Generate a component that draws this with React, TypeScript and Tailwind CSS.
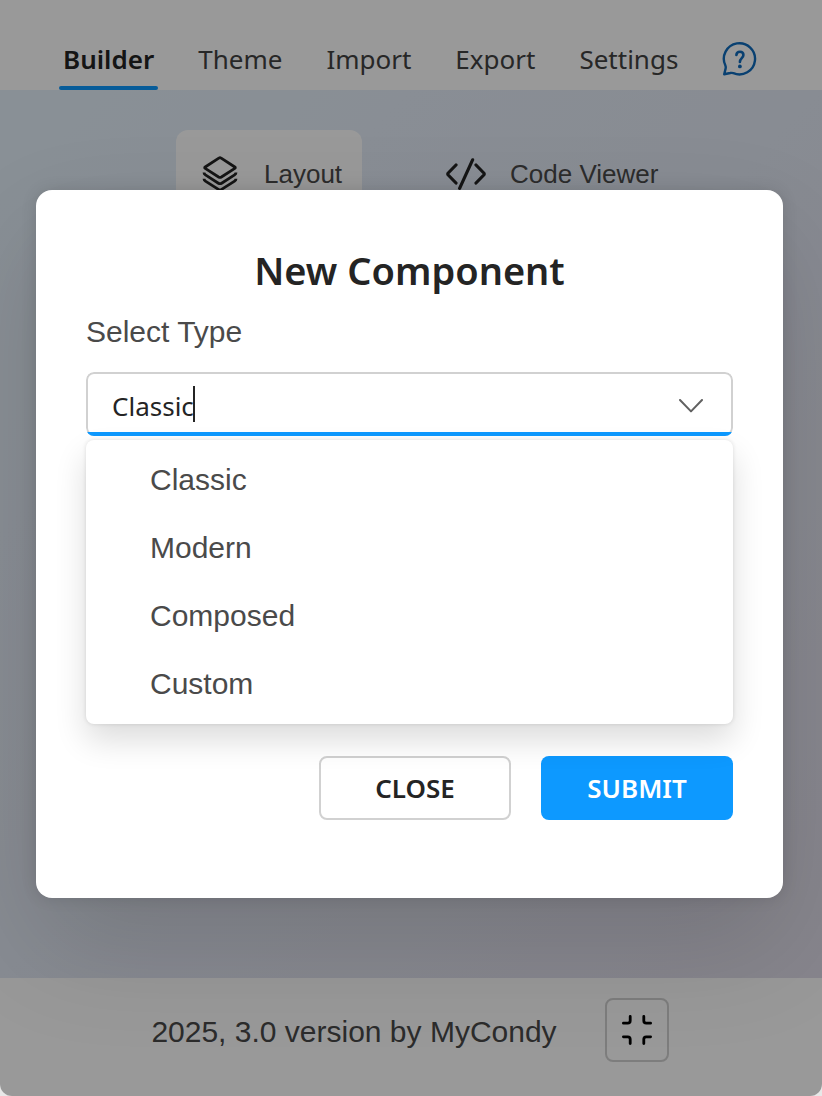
import { useState } from "react";

const tabs = ["Builder", "Theme", "Import", "Export", "Settings"];
const types = ["Classic", "Modern", "Composed", "Custom"];

function HelpIcon() {
  return (
    <svg viewBox="0 0 36 36" className="size-9" fill="none" stroke="currentColor" strokeWidth="2.4" strokeLinecap="round" strokeLinejoin="round">
      <path d="M2.2 33.2 L3.6 27.6 Q4 26 3.4 24.6 A15.6 15.6 0 1 1 11.4 32.2 Q9.8 31.6 8.2 32 Z" />
      <path d="M14.4 14 C14.6 9.6 21.4 9.6 21.4 14 C21.4 17 17.9 17.4 17.9 21" strokeWidth="2.6" />
      <circle cx="17.9" cy="25.4" r="1.9" fill="currentColor" stroke="none" />
    </svg>
  );
}

function LayersIcon() {
  return (
    <svg viewBox="0 0 36 36" className="size-9" fill="none" stroke="currentColor" strokeWidth="2.8" strokeLinejoin="round">
      <path d="M16.8 2.1 Q18 1.4 19.2 2.1 L32.8 11 Q33.8 11.7 32.8 12.4 L19.4 21 Q18 21.8 16.6 21 L3.2 12.4 Q2.2 11.7 3.2 11 Z" />
      <path d="M2 16.6 Q2 18 3.4 18.9 L16.4 27.2 Q18 28.2 19.6 27.2 L32.6 18.9 Q34 18 34 16.6" />
      <path d="M2 22.8 Q2 24.2 3.4 25.1 L16.4 33.4 Q18 34.4 19.6 33.4 L32.6 25.1 Q34 24.2 34 22.8" />
    </svg>
  );
}

function CodeIcon() {
  return (
    <svg viewBox="0 0 40 32" className="h-8 w-10" fill="none" stroke="currentColor" strokeWidth="3.2" strokeLinecap="round" strokeLinejoin="round">
      <path d="M10 7 L2.2 15 Q1.4 16 2.2 17 L10 25" />
      <path d="M30 7 L37.8 15 Q38.6 16 37.8 17 L30 25" />
      <path d="M26.6 1.8 L13.6 30.4" />
    </svg>
  );
}

function ChevronIcon() {
  return (
    <svg viewBox="0 0 24 14" className="h-3.5 w-6" fill="none" stroke="currentColor" strokeWidth="2" strokeLinecap="round" strokeLinejoin="round">
      <path d="M1 1 L12 12.4 L23 1" />
    </svg>
  );
}

function ShrinkIcon() {
  return (
    <svg viewBox="0 0 32 32" className="size-8" fill="none" stroke="currentColor" strokeWidth="2.8" strokeLinecap="round" strokeLinejoin="round">
      <path d="M2.4 9.2 H6.8 Q9.2 9.2 9.2 6.8 V2.4" />
      <path d="M29.6 9.2 H25.2 Q22.8 9.2 22.8 6.8 V2.4" />
      <path d="M2.4 22.8 H6.8 Q9.2 22.8 9.2 25.2 V29.6" />
      <path d="M29.6 22.8 H25.2 Q22.8 22.8 22.8 25.2 V29.6" />
    </svg>
  );
}

function Header() {
  return (
    <header className="flex h-[90px] shrink-0 items-end bg-white pl-[59px]">
      <nav className="flex items-end gap-9">
        {tabs.map((tab, i) => (
          <a
            key={tab}
            href="#"
            className={
              i === 0
                ? "relative px-1 pb-[13px] text-[26px] leading-9 font-semibold text-[#242424] after:absolute after:inset-x-0 after:bottom-0 after:h-1 after:rounded-full after:bg-[#0d99ff]"
                : "px-1 pb-[13px] text-[26px] leading-9 text-[#424242]"
            }
          >
            {tab}
          </a>
        ))}
        <button type="button" aria-label="Help" className="ml-1 pb-[13px] text-[#0f6cbd]">
          <HelpIcon />
        </button>
      </nav>
    </header>
  );
}

function Footer() {
  return (
    <footer className="flex h-[118px] shrink-0 items-start justify-center gap-12 bg-white pt-5 pr-0.5 font-['Liberation_Sans',Arial,sans-serif]">
      <p className="text-3xl leading-[68px] text-[#4a4a4a]">2025, 3.0 version by MyCondy</p>
      <button type="button" aria-label="Exit full screen" className="flex size-16 items-center justify-center rounded-lg border-2 border-[#d1d1d1] text-black">
        <ShrinkIcon />
      </button>
    </footer>
  );
}

function TypePicker() {
  const [value, setValue] = useState("Classic");

  return (
    <div className="relative">
      <label htmlFor="type" className="mb-2 block font-['Liberation_Sans',Arial,sans-serif] text-3xl leading-[64px] text-[#4a4a4a]">
        Select Type
      </label>
      <div className="relative overflow-hidden rounded-lg after:absolute after:inset-x-0 after:bottom-0 after:h-1 after:bg-[#0d99ff]">
        <input
          id="type"
          type="text"
          role="combobox"
          aria-expanded="true"
          aria-controls="type-list"
          value={value}
          onChange={(e) => setValue(e.target.value)}
          className="block h-16 w-full rounded-lg border-2 border-[#d1d1d1] bg-white px-6 pt-1 text-[26px] text-[#242424] caret-transparent outline-none"
        />
        {/* Caret */}
        <span className="absolute top-3.5 left-[107px] h-9 w-0.5 bg-[#242424]" />
        <button type="button" aria-label="Toggle list" className="absolute inset-y-0 right-[30px] pt-1 text-[#616161]">
          <ChevronIcon />
        </button>
      </div>
      {/* Options */}
      <ul
        id="type-list"
        role="listbox"
        aria-label="Select Type"
        className="absolute inset-x-0 top-full mt-1 rounded-lg bg-white py-1.5 font-['Liberation_Sans',Arial,sans-serif] shadow-[0_0_4px_rgba(0,0,0,0.12),0_16px_32px_rgba(0,0,0,0.14)]"
      >
        {types.map((type) => (
          <li key={type} role="option" aria-selected={type === value} onClick={() => setValue(type)} className="cursor-pointer pl-16 text-3xl leading-[68px] text-[#4a4a4a]">
            {type}
          </li>
        ))}
      </ul>
    </div>
  );
}

function App() {
  return (
    <div className="bg-[#e8e8e8]">
      <div className="relative flex min-h-screen flex-col overflow-hidden rounded-b-xl font-['Noto_Sans','Open_Sans',sans-serif]">
        <Header />

        <main className="flex flex-1 items-start bg-linear-to-br from-[#e5f1fb] via-[#e3e9f5] to-[#e2deeb] pt-10 pl-44 font-['Liberation_Sans',Arial,sans-serif] text-[26px] text-[#4a4a4a]">
          <button type="button" className="flex h-22 items-center gap-[26px] rounded-xl bg-white pr-5 pl-[26px]">
            <span className="text-[#242424]"><LayersIcon /></span>
            Layout
          </button>
          <button type="button" className="ml-[58px] flex h-22 items-center gap-6 rounded-xl px-[26px]">
            <span className="text-[#242424]"><CodeIcon /></span>
            Code Viewer
          </button>
        </main>

        <Footer />

        <div className="absolute inset-0 flex items-center justify-center bg-black/40 pr-[39px] pb-2 pl-9">
          <div role="dialog" aria-labelledby="dialog-title" className="w-full rounded-2xl bg-white px-[50px] pt-[50px] pb-[78px] shadow-[0_0_16px_rgba(0,0,0,0.12),0_48px_112px_rgba(0,0,0,0.14)]">
            <h1 id="dialog-title" className="text-center text-[38px] leading-[60px] font-semibold text-[#242424]">New Component</h1>
            <TypePicker />
            <div className="mt-80 flex justify-end gap-[30px] text-[26px] font-semibold">
              <button type="button" className="h-16 w-48 rounded-lg border-2 border-[#d1d1d1] bg-white text-[#242424]">CLOSE</button>
              <button type="button" className="h-16 w-48 rounded-lg bg-[#0d99ff] text-white">SUBMIT</button>
            </div>
          </div>
        </div>
      </div>
    </div>
  );
}

export default App;
